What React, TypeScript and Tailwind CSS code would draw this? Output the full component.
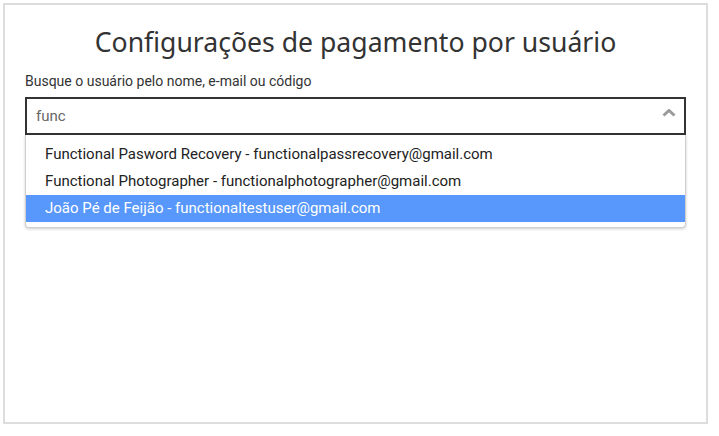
import React from 'react';

const users = [
  { name: 'Functional Pasword Recovery', email: 'functionalpassrecovery@gmail.com' },
  { name: 'Functional Photographer', email: 'functionalphotographer@gmail.com' },
  { name: 'João Pé de Feijão', email: 'functionaltestuser@gmail.com' },
];

export default function App() {
  const [query, setQuery] = React.useState('func');
  const [active, setActive] = React.useState(2);

  return (
    <div className="w-[719px] h-[436px] bg-white p-[3px]">
      <div className="w-[705px] h-[421px] border-2 border-[#dddddd] px-5 pt-[19px]">
        <h1 className="text-center text-[26.6px] leading-[36px] text-[#333333] font-['Noto_Sans',sans-serif]">
          Configurações de pagamento por usuário
        </h1>
        <label className="block mt-[11px] text-[14px] leading-[20px] text-[#333333] font-['Roboto',sans-serif]">
          Busque o usuário pelo nome, e-mail ou código
        </label>
        <div className="relative mt-[6px] font-['Roboto',sans-serif]">
          <div className="flex items-center h-[38px] border-2 border-[#333333] pl-[9px] pr-[8px]">
            <input
              value={query}
              onChange={(e) => setQuery(e.target.value)}
              className="flex-1 outline-none text-[15px] text-[#666666] bg-transparent"
            />
            <svg width="14" height="8" viewBox="0 0 14 8" className="mt-[-6px]">
              <path d="M1.5 6.5 L7 1.5 L12.5 6.5" fill="none" stroke="#9a9a9a" strokeWidth="3" strokeLinejoin="miter" />
            </svg>
          </div>
          <ul className="absolute left-0 right-0 top-[38px] bg-white border border-t-0 border-[#cfcfcf] rounded-b-[4px] shadow-[0_1px_3px_rgba(0,0,0,0.2)] pt-[6px] pb-[5px]">
            {users.map((u, i) => (
              <li
                key={u.email}
                onMouseEnter={() => setActive(i)}
                className={`h-[27px] leading-[27px] pl-[19px] text-[15px] ${
                  i === active ? 'bg-[#5897fb] text-white' : 'text-[#222222]'
                }`}
              >
                {u.name} - {u.email}
              </li>
            ))}
          </ul>
        </div>
      </div>
    </div>
  );
}
